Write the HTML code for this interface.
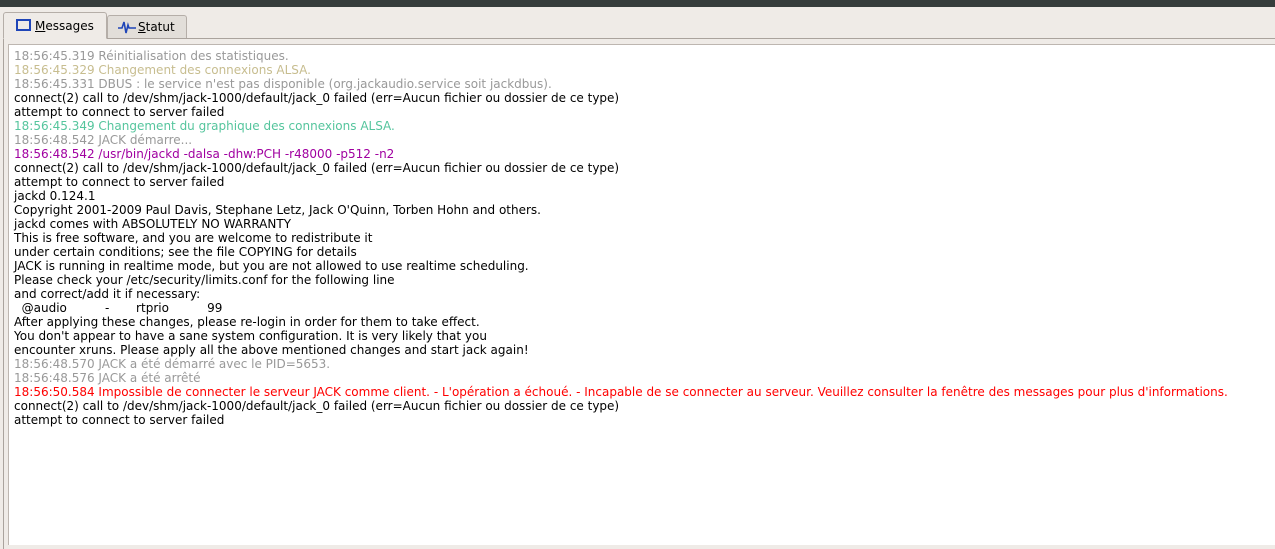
<!DOCTYPE html>
<html><head><meta charset="utf-8"><style>
body{margin:0;width:1275px;height:538px;background:#efebe7;position:relative;overflow:hidden;font-family:"DejaVu Sans","Liberation Sans",sans-serif;}
.top{position:absolute;left:0;top:0;width:1275px;height:7px;background:#363d3c;}
.frame{position:absolute;left:3px;top:38px;width:1280px;height:510px;border-top:1px solid #aaa39d;border-left:1px solid #aaa39d;}
.tab{position:absolute;font-size:12px;color:#000;box-sizing:border-box;border:1px solid #b5aea8;border-bottom:none;border-radius:3px 3px 0 0;}
.t1{left:3px;top:12px;width:104px;height:27px;background:#efebe7;border-bottom:1px solid #efebe7;z-index:2;}
.t2{left:107px;top:15px;width:80px;height:23px;background:#e2ded9;}
.panel{position:absolute;left:8px;top:44px;width:1270px;height:500px;background:#fff;border-top:1px solid #bdb6b0;border-left:1px solid #bdb6b0;}
.log{position:absolute;left:14px;top:49px;font-size:12px;line-height:14px;white-space:pre;color:#000;}
.g{color:#999}.y{color:#c7bd8f}.tl{color:#55c59d}.p{color:#a000a0}.r{color:#f00}
u{text-decoration:underline}
</style></head><body>
<div class="top"></div>
<div class="frame"></div>
<div class="tab t1"><svg style="position:absolute;left:12px;top:6px" width="15" height="13"><rect x="1" y="1" width="13" height="10" fill="none" stroke="#1f45b8" stroke-width="2"/></svg><span style="position:absolute;left:31px;top:6px"><u>M</u>essages</span></div>
<div class="tab t2"><svg style="position:absolute;left:9px;top:3px" width="20" height="16"><path d="M1 9 H5 L7 3 L9 14 L11 6 L12 9 H19" fill="none" stroke="#1f45b8" stroke-width="1.6"/></svg><span style="position:absolute;left:30px;top:4px"><u>S</u>tatut</span></div>
<div class="panel"></div>
<div class="log"><span class="g">18:56:45.319 Réinitialisation des statistiques.</span>
<span class="y">18:56:45.329 Changement des connexions ALSA.</span>
<span class="g">18:56:45.331 DBUS : le service n'est pas disponible (org.jackaudio.service soit jackdbus).</span>
connect(2) call to /dev/shm/jack-1000/default/jack_0 failed (err=Aucun fichier ou dossier de ce type)
attempt to connect to server failed
<span class="tl">18:56:45.349 Changement du graphique des connexions ALSA.</span>
<span class="g">18:56:48.542 JACK démarre...</span>
<span class="p">18:56:48.542 /usr/bin/jackd -dalsa -dhw:PCH -r48000 -p512 -n2</span>
connect(2) call to /dev/shm/jack-1000/default/jack_0 failed (err=Aucun fichier ou dossier de ce type)
attempt to connect to server failed
jackd 0.124.1
Copyright 2001-2009 Paul Davis, Stephane Letz, Jack O'Quinn, Torben Hohn and others.
jackd comes with ABSOLUTELY NO WARRANTY
This is free software, and you are welcome to redistribute it
under certain conditions; see the file COPYING for details
JACK is running in realtime mode, but you are not allowed to use realtime scheduling.
Please check your /etc/security/limits.conf for the following line
and correct/add it if necessary:
  @audio          -       rtprio          99
After applying these changes, please re-login in order for them to take effect.
You don't appear to have a sane system configuration. It is very likely that you
encounter xruns. Please apply all the above mentioned changes and start jack again!
<span class="g">18:56:48.570 JACK a été démarré avec le PID=5653.</span>
<span class="g">18:56:48.576 JACK a été arrêté</span>
<span class="r">18:56:50.584 Impossible de connecter le serveur JACK comme client. - L'opération a échoué. - Incapable de se connecter au serveur. Veuillez consulter la fenêtre des messages pour plus d'informations.</span>
connect(2) call to /dev/shm/jack-1000/default/jack_0 failed (err=Aucun fichier ou dossier de ce type)
attempt to connect to server failed</div>
</body></html>
